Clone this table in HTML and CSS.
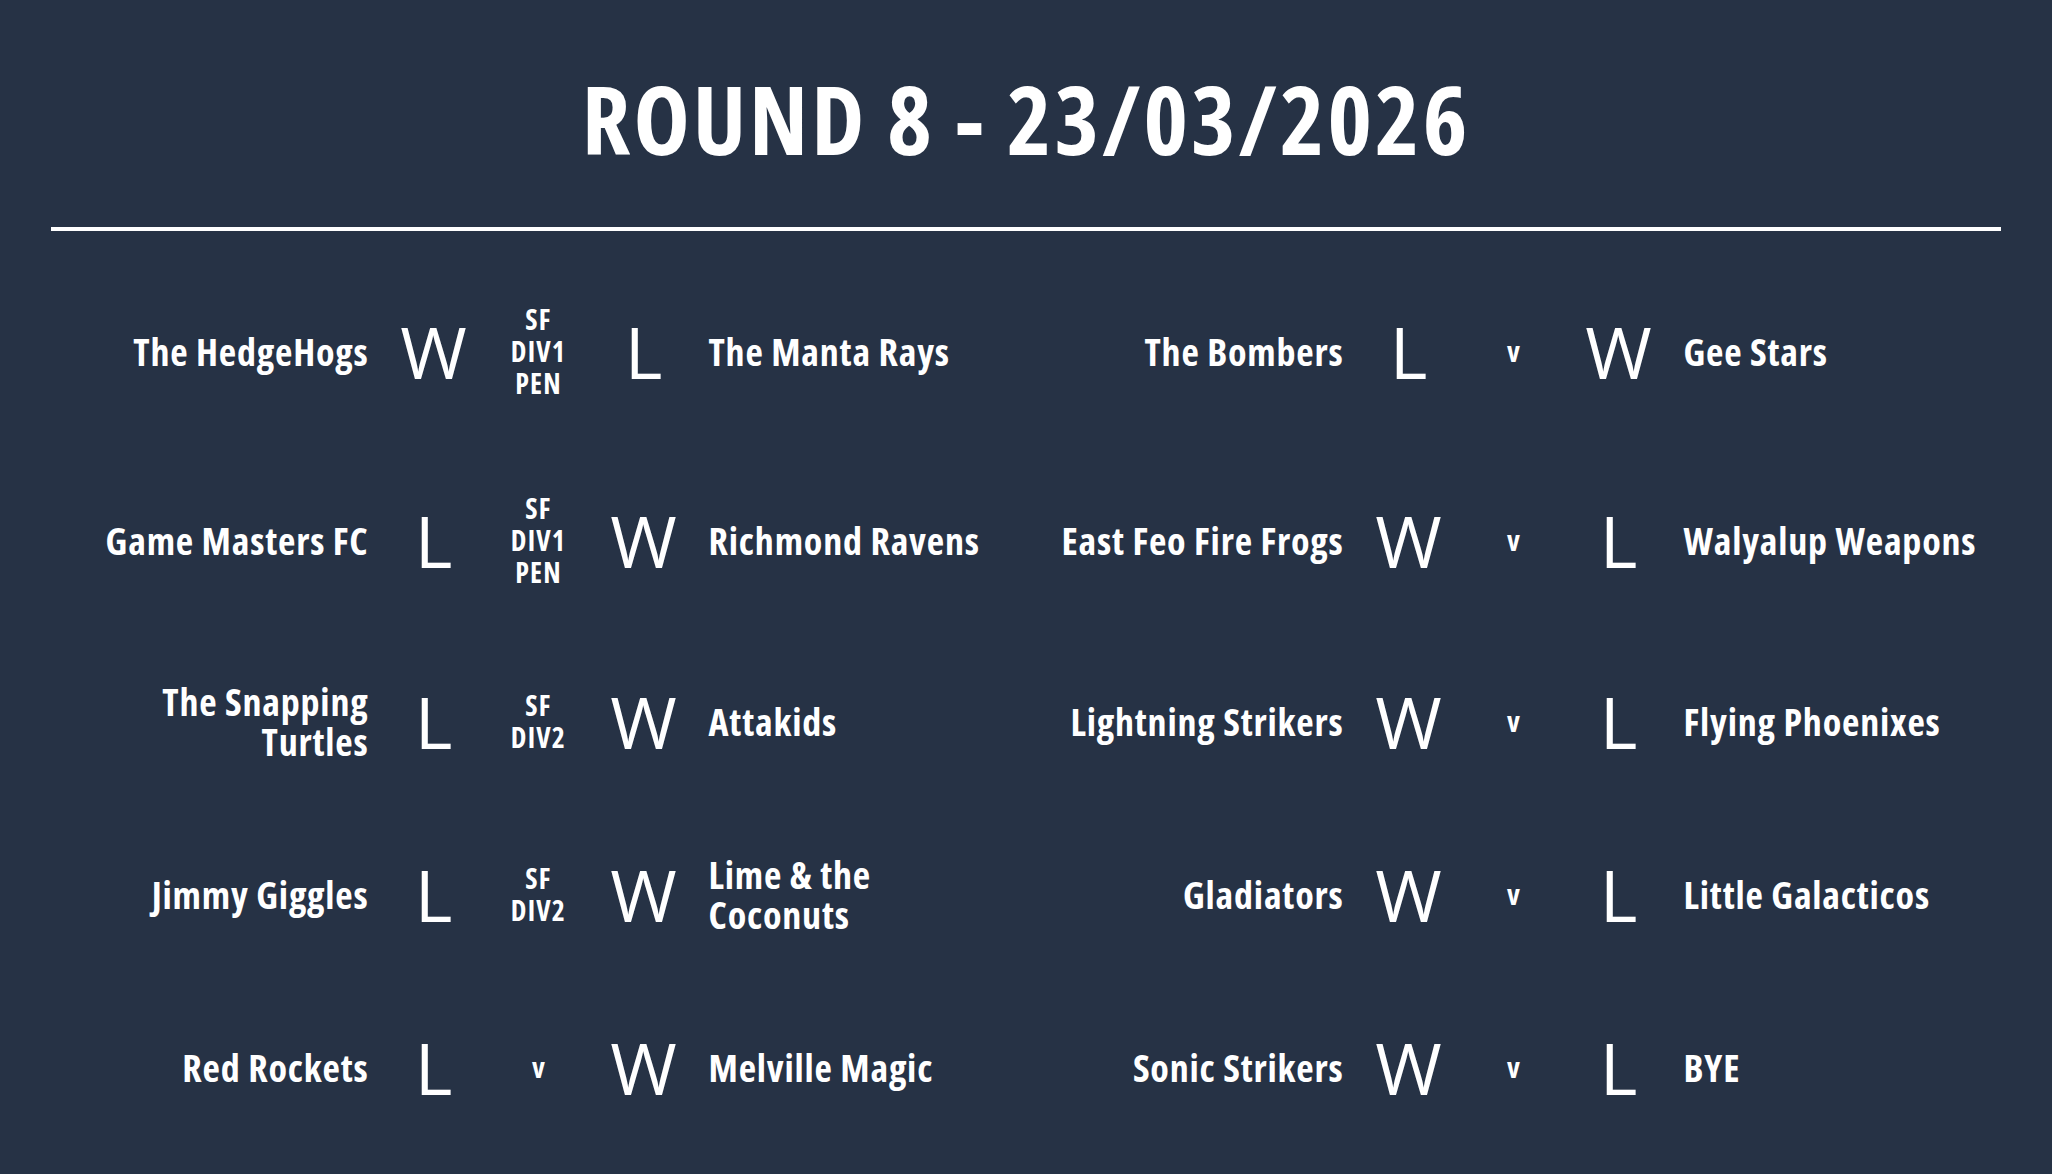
FILE: index.html
```html
<!DOCTYPE html>
<html lang="en">
<head>
<meta charset="utf-8">
<title>Round 8 - 23/03/2026</title>
<link rel="stylesheet" href="styles.css">
</head>
<body>
<div class="page">
  <header class="header">
    <h1 class="title">ROUND 8 - 23/03/2026</h1>
  </header>
  <hr class="rule">
  <main class="results">
    <div class="team home">The HedgeHogs</div>
    <div class="res">W</div>
    <div class="mid">SF<br>DIV1<br>PEN</div>
    <div class="res">L</div>
    <div class="team away">The Manta Rays</div>
    <div class="team home">The Bombers</div>
    <div class="res">L</div>
    <div class="mid vs">v</div>
    <div class="res">W</div>
    <div class="team away">Gee Stars</div>

    <div class="team home">Game Masters FC</div>
    <div class="res">L</div>
    <div class="mid">SF<br>DIV1<br>PEN</div>
    <div class="res">W</div>
    <div class="team away">Richmond Ravens</div>
    <div class="team home">East Feo Fire Frogs</div>
    <div class="res">W</div>
    <div class="mid vs">v</div>
    <div class="res">L</div>
    <div class="team away">Walyalup Weapons</div>

    <div class="team home">The Snapping Turtles</div>
    <div class="res">L</div>
    <div class="mid">SF<br>DIV2</div>
    <div class="res">W</div>
    <div class="team away">Attakids</div>
    <div class="team home">Lightning Strikers</div>
    <div class="res">W</div>
    <div class="mid vs">v</div>
    <div class="res">L</div>
    <div class="team away">Flying Phoenixes</div>

    <div class="team home">Jimmy Giggles</div>
    <div class="res">L</div>
    <div class="mid">SF<br>DIV2</div>
    <div class="res">W</div>
    <div class="team away">Lime &amp; the Coconuts</div>
    <div class="team home">Gladiators</div>
    <div class="res">W</div>
    <div class="mid vs">v</div>
    <div class="res">L</div>
    <div class="team away">Little Galacticos</div>

    <div class="team home">Red Rockets</div>
    <div class="res">L</div>
    <div class="mid vs">v</div>
    <div class="res">W</div>
    <div class="team away">Melville Magic</div>
    <div class="team home">Sonic Strikers</div>
    <div class="res">W</div>
    <div class="mid vs">v</div>
    <div class="res">L</div>
    <div class="team away">BYE</div>
  </main>
</div>
</body>
</html>
```
FILE: styles.css
```css
html, body {
  margin: 0;
  padding: 0;
  background: #263245;
}
body {
  color: #ffffff;
  font-family: "Open Sans", "Liberation Sans", sans-serif;
  font-stretch: 75%;
  width: 2052px;
  height: 1174px;
  overflow: hidden;
}
.page {
  padding: 61px 51px 0 51px;
}
.header {
  text-align: center;
}
.title {
  margin: 0;
  font-size: 95px;
  line-height: 114px;
  font-weight: 700;
  font-stretch: 75%;
  letter-spacing: 3px;
}
.rule {
  margin: 52px 0 0 0;
  border: 0;
  height: 4px;
  background: #ffffff;
}
.results {
  margin-top: 72px;
  display: grid;
  grid-template-columns: 1fr 80px 130px 80px 1fr 1fr 80px 130px 80px 1fr;
  row-gap: 93px;
  align-items: center;
}
.team {
  font-size: 38px;
  line-height: 40px;
  font-weight: 700;
  letter-spacing: 0.8px;
}
.home {
  text-align: right;
  padding: 0 25px 0 18px;
}
.away {
  text-align: left;
  padding: 0 18px 0 25px;
}
.res {
  text-align: center;
  font-size: 72px;
  line-height: 80px;
  font-weight: 500;
  font-stretch: 88%;
}
.mid {
  text-align: center;
  font-size: 28px;
  line-height: 32px;
  font-weight: 700;
  letter-spacing: 1.2px;
}
.vs {
  font-size: 29px;
  letter-spacing: 0;
}
```
